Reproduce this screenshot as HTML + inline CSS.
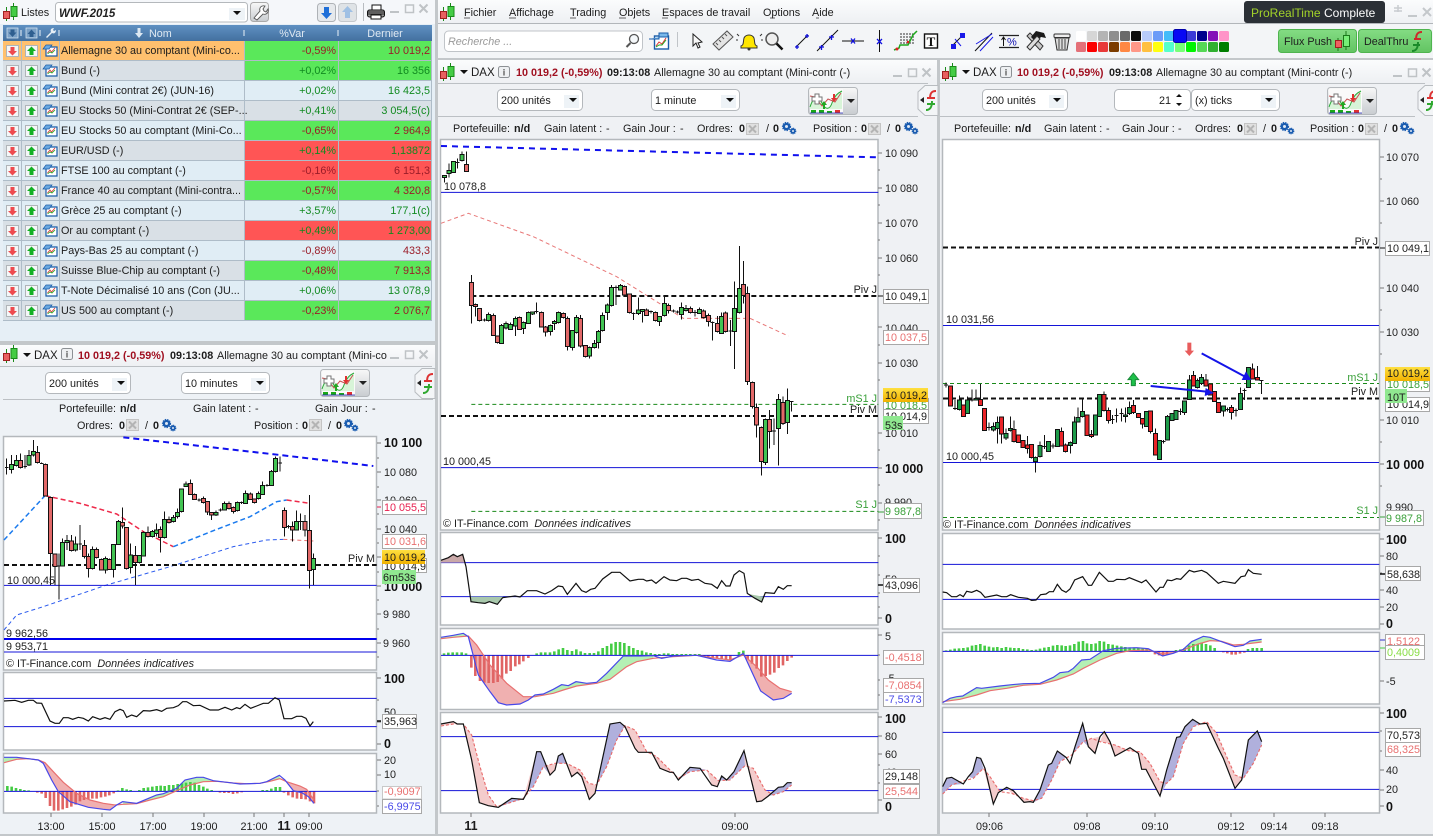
<!DOCTYPE html>
<html><head><meta charset="utf-8"><title>ProRealTime</title>
<style>
html,body{margin:0;padding:0;width:1433px;height:836px;overflow:hidden;background:#c3c7ca}
svg{display:block;position:absolute;left:0;top:0}
text{font-family:"Liberation Sans",sans-serif;font-size:10.8px;fill:#1c1c1c;white-space:pre}
.b{font-weight:bold}.e{text-anchor:end}.m{text-anchor:middle}
.bg{font-weight:bold;font-size:12.5px;fill:#111}
.ax{fill:#222;font-size:10.8px}
.p{fill:#a01020;font-weight:bold}
.neg{fill:#9a1c28}.pos{fill:#118a20}
.s{vector-effect:non-scaling-stroke;fill:none}
.w{stroke:#111;stroke-width:1;vector-effect:non-scaling-stroke;fill:none;shape-rendering:crispEdges}
.g{fill:#42c453;stroke:#111;stroke-width:1;vector-effect:non-scaling-stroke;shape-rendering:crispEdges}
.r{fill:#e26868;stroke:#111;stroke-width:1;vector-effect:non-scaling-stroke;shape-rendering:crispEdges}
.g2{fill:#1e9c4a;stroke:#111;stroke-width:1;vector-effect:non-scaling-stroke;shape-rendering:crispEdges}
.r2{fill:#ea2428;stroke:#111;stroke-width:1;vector-effect:non-scaling-stroke;shape-rendering:crispEdges}
.bl{stroke:#1414d8;stroke-width:1;vector-effect:non-scaling-stroke;fill:none}
.k{stroke:#111;stroke-width:1.2;vector-effect:non-scaling-stroke;fill:none}
.rl{stroke:#e87070;stroke-width:1.2;vector-effect:non-scaling-stroke;fill:none}
.rd{stroke:#e86a6a;stroke-width:1.1;stroke-dasharray:3 2;vector-effect:non-scaling-stroke;fill:none}
.ub{stroke:#4848e8;stroke-width:1.2;vector-effect:non-scaling-stroke;fill:none}
.bg1{stroke:#44cc44;stroke-width:2.6;vector-effect:non-scaling-stroke;fill:none}
.bg2{stroke:#e06464;stroke-width:2.6;vector-effect:non-scaling-stroke;fill:none}
.fr{fill:#f0b0b0}.fg{fill:#b4f0b4}.fp{fill:#f4cccc}.fv{fill:#b0b0dc}
.fb{fill:#fff;stroke:#b4b8bc;stroke-width:1.5}
.vb{fill:#fff;stroke:#a8a8a8;stroke-width:1}
.sel{fill:#fff;stroke:#b4b8bc;stroke-width:1}
.tk{stroke:#777;stroke-width:1;fill:none;shape-rendering:crispEdges}
.sep{stroke:#aeb6bc;stroke-width:1;shape-rendering:crispEdges}
</style></head><body>
<svg xmlns="http://www.w3.org/2000/svg" width="1433" height="836" viewBox="0 0 1433 836">
<defs>
<linearGradient id="tg" x1="0" y1="0" x2="0" y2="1"><stop offset="0" stop-color="#fbfcfd"/><stop offset="1" stop-color="#eef0f3"/></linearGradient>
<linearGradient id="hd" x1="0" y1="0" x2="0" y2="1"><stop offset="0" stop-color="#5f90c2"/><stop offset="1" stop-color="#43709f"/></linearGradient>
<linearGradient id="yl" x1="0" y1="0" x2="0" y2="1"><stop offset="0" stop-color="#ffe040"/><stop offset="1" stop-color="#f0b000"/></linearGradient>
<linearGradient id="gb" x1="0" y1="0" x2="0" y2="1"><stop offset="0" stop-color="#84dc84"/><stop offset="1" stop-color="#62c462"/></linearGradient>
<linearGradient id="btn" x1="0" y1="0" x2="0" y2="1"><stop offset="0" stop-color="#f8f8f8"/><stop offset="1" stop-color="#c8ccd0"/></linearGradient>
<g id="logo"><path d="M6.5 6v14M13.500 2v17" stroke="#1a8a1a" stroke-width="1"/><rect x="3.500" y="10.500" width="6" height="7" fill="#e86060" stroke="#a02020"/><rect x="11" y="5.500" width="6" height="10" fill="#44cc44" stroke="#1a8a1a"/></g>
<g id="rowi"><rect x="6.500" y="4.500" width="12" height="11" fill="#f4f6f7" stroke="#b0b4b8"/><path d="M10.500 6h4v4h2.500l-4.500 4.500-4.500-4.500h2.500z" fill="#ee4a4e"/><rect x="25.500" y="4.500" width="12" height="11" fill="#f4f6f7" stroke="#b0b4b8"/><path d="M29.500 14h4v-4h2.500l-4.500-4.500-4.500 4.500h2.500z" fill="#14b024"/><path d="M46 6h11v9h-11z" fill="#fff" stroke="#1a5ca8" stroke-width="1.200"/><path d="M43 8l3-4h6l-3 4z" fill="#6aa8e0" stroke="#1a5ca8" stroke-width=".7"/><path d="M47.500 12l2.500-3 1.500 2 3.500-4" fill="none" stroke="#e03030" stroke-width=".8"/><path d="M47.500 13l2.500-2 2 1 3-3" fill="none" stroke="#22aa22" stroke-width=".8"/></g>
<g id="gear"><circle cx="5.500" cy="5.500" r="3.800" fill="#1a5cb0" stroke="#1a5cb0" stroke-width="1.600" stroke-dasharray="1.300 1"/><circle cx="5.500" cy="5.500" r="1.500" fill="#dfe8f4"/><circle cx="12" cy="10" r="2.700" fill="#1a5cb0" stroke="#1a5cb0" stroke-width="1.300" stroke-dasharray="1 .8"/><circle cx="12" cy="10" r="1" fill="#dfe8f4"/></g>
<g id="xb"><rect x=".5" y=".5" width="12" height="11" fill="#e0e0e0" stroke="#c4c4c4"/><path d="M3 2.500l7 7M10 2.500l-7 7" stroke="#b4b4b4" stroke-width="2"/></g>
<g id="win"><path d="M0 8h9" stroke="#bfc3c6" stroke-width="2"/><rect x="15.500" y="1" width="8" height="7.500" fill="none" stroke="#bfc3c6" stroke-width="1.500"/><path d="M29.500 0.500l8 8M37.500 0.500l-8 8" stroke="#bfc3c6" stroke-width="2"/></g>
<g id="info"><rect x=".5" y=".5" width="11" height="11" rx="2" fill="#eef0f2" stroke="#8c9094"/><text x="6" y="9.500" class="m b" style="font-size:9px;fill:#555">i</text></g>
<g id="ind"><rect x=".5" y=".5" width="49" height="27" rx="3" fill="url(#btn)" stroke="#b4b8bc"/><rect x="2" y="2" width="33" height="24" fill="#fafafa"/><path d="M2 20c4-12 8-12 12-4 4 8 8 6 10 0 3-8 6-10 10-12v18H2z" fill="#d8f4d8"/><path d="M2 20c4-12 8-12 12-4 4 8 8 6 10 0 3-8 6-10 10-12" fill="none" stroke="#2aaa3a"/><path d="M2 9l5 1 7 9 6-7 7 3 6-9" fill="none" stroke="#c85050"/><path d="M4 10h3v-3h4v3h3v4h-3v3H7v-3H4z" fill="#fff" stroke="#777"/><path d="M15 22v-4h-2l3-4 3 4h-2v4z" fill="#22a822"/><path d="M25 7v4h-2l3 4 3-4h-2V7z" fill="#e03030"/><path d="M3 26v-3h5v3zM11 26v-3h5v3zM19 26v-2h5v2z" fill="#18a818"/><path d="M27 26v-3h5v3z" fill="#e03030"/><path d="M2 26h33" stroke="#2222bb" stroke-width=".8"/><path d="M39 12h8l-4 4z" fill="#222"/></g>
<g id="ficon"><path d="M8 .5h13v30H8L1 24V7z" fill="#f3f5f7" stroke="#b8bcc0"/><path d="M3 15l4-3v6z" fill="#222"/><path d="M13 14c0-5 1-8 6-8M10 13h8" stroke="#dd3333" stroke-width="2" fill="none"/><path d="M15 16c0 5-1 9-6 9M10 19h8" stroke="#2fa82f" stroke-width="2" fill="none"/></g>
<path id="arr" d="M0 0h8l-4 4z" fill="#111"/>
</defs>

<!-- LEFT LIST PANEL -->
<rect x="0" y="0" width="435" height="341" fill="#e6eff6"/>
<rect x="0" y="0" width="435" height="24" fill="#f5f7fa"/>
<use href="#logo" x="0" y="1"/>
<text x="21" y="16">Listes</text>
<rect x="55.500" y="2.500" width="192" height="19.500" rx="3" class="sel"/>
<text x="59" y="17" class="b" style="font-style:italic;font-size:11.500px;fill:#222">WWF.2015</text>
<rect x="229" y="8" width="16" height="12" fill="#eef3f7"/><use href="#arr" x="233" y="11"/>
<rect x="250.500" y="2.500" width="18" height="19" rx="3" fill="url(#btn)" stroke="#aaa"/>
<path d="M254 18l6-7c-1-3 1-6 5-5l-2 3 1 2 2 1 2-3c1 4-2 6-5 5l-6 6z" fill="#fff" stroke="#555" stroke-width=".9"/>
<rect x="317.500" y="3.500" width="18" height="18" rx="3" fill="#e6e9ec" stroke="#aeb2b6"/><path d="M324 7h5v6h3l-5.500 6-5.500-6h3z" fill="#1f6fd8"/>
<rect x="338.500" y="3.500" width="18" height="18" rx="3" fill="#dfe3e6" stroke="#c4c8cc"/><path d="M345 18h5v-6h3l-5.500-6-5.500 6h3z" fill="#9fc0e4"/>
<path d="M363.500 3v18" stroke="#b8bcc0"/>
<path d="M372 5h9v5h-9z" fill="#fff" stroke="#111"/><rect x="367.500" y="10" width="17" height="7" rx="2" fill="#999" stroke="#111"/><path d="M371 15h10v4h-10z" fill="#fff" stroke="#111"/><path d="M368 12h16M368 14h16" stroke="#222"/>
<use href="#win" x="390" y="4"/>

<rect x="3" y="25" width="429" height="16" fill="url(#hd)"/>
<g stroke="#eaf2f8" shape-rendering="crispEdges"><path d="M21 30v6M40 30v6M59 30v6M244 30v6M338 30v6"/></g>
<rect x="7" y="28" width="11" height="10" fill="#7aa0c6" stroke="#dce8f2" stroke-width=".7"/><path d="M10.500 29.500h4v3h2l-4 4.500-4-4.500h2z" fill="#2f5f90"/>
<rect x="26" y="28" width="11" height="10" fill="#7aa0c6" stroke="#dce8f2" stroke-width=".7"/><path d="M29.500 37h4v-3h2l-4-4.500-4 4.500h2z" fill="#2f5f90"/>
<path d="M46 37l5-5c-1-2 0-4 3-4l-1 2 1 1 2-1c0 3-2 4-4 3l-5 5z" fill="#e6eef5"/>
<path d="M137.500 28h3v5h2.500l-4 5-4-5h2.500z" fill="#dce8f2"/>
<text x="149" y="37" style="fill:#dfe9f2">Nom</text>
<text x="292" y="37" class="m" style="fill:#dfe9f2">%Var</text>
<text x="385" y="37" class="m" style="fill:#dfe9f2">Dernier</text>

<!-- rows -->
<g shape-rendering="crispEdges">
<rect x="3" y="41" width="241" height="20" fill="#ffc06e"/><rect x="244" y="41" width="188" height="20" fill="#5ae85a"/>
<rect x="3" y="61" width="241" height="20" fill="#d9e0e6"/><rect x="244" y="61" width="188" height="20" fill="#5ae85a"/>
<rect x="3" y="81" width="429" height="20" fill="#e0edf5"/>
<rect x="3" y="101" width="429" height="20" fill="#d9e0e6"/>
<rect x="3" y="121" width="241" height="20" fill="#e0edf5"/><rect x="244" y="121" width="188" height="20" fill="#5ae85a"/>
<rect x="3" y="141" width="241" height="20" fill="#d9e0e6"/><rect x="244" y="141" width="188" height="20" fill="#ff5555"/>
<rect x="3" y="161" width="241" height="20" fill="#e0edf5"/><rect x="244" y="161" width="188" height="20" fill="#ff5555"/>
<rect x="3" y="181" width="241" height="20" fill="#d9e0e6"/><rect x="244" y="181" width="188" height="20" fill="#5ae85a"/>
<rect x="3" y="201" width="429" height="20" fill="#e0edf5"/>
<rect x="3" y="221" width="241" height="20" fill="#d9e0e6"/><rect x="244" y="221" width="188" height="20" fill="#ff5555"/>
<rect x="3" y="241" width="429" height="20" fill="#e0edf5"/>
<rect x="3" y="261" width="241" height="20" fill="#d9e0e6"/><rect x="244" y="261" width="188" height="20" fill="#5ae85a"/>
<rect x="3" y="281" width="429" height="20" fill="#e0edf5"/>
<rect x="3" y="301" width="241" height="20" fill="#d9e0e6"/><rect x="244" y="301" width="188" height="20" fill="#5ae85a"/>
<path d="M3 60.500h429M3 80.500h429M3 100.500h429M3 120.500h429M3 140.500h429M3 160.500h429M3 180.500h429M3 200.500h429M3 220.500h429M3 240.500h429M3 260.500h429M3 280.500h429M3 300.500h429M3 320.500h429M21.500 41v280M40.500 41v280M59.500 41v280M244.500 41v280M338.500 41v280M431.500 41v280" stroke="#aebcc8"/>
</g>
<use href="#rowi" y="41"/><use href="#rowi" y="61"/><use href="#rowi" y="81"/><use href="#rowi" y="101"/><use href="#rowi" y="121"/><use href="#rowi" y="141"/><use href="#rowi" y="161"/><use href="#rowi" y="181"/><use href="#rowi" y="201"/><use href="#rowi" y="221"/><use href="#rowi" y="241"/><use href="#rowi" y="261"/><use href="#rowi" y="281"/><use href="#rowi" y="301"/>
<g>
<text x="61" y="54">Allemagne 30 au comptant (Mini-co...</text><text x="336" y="54" class="e neg">-0,59%</text><text x="430" y="54" class="e neg">10 019,2</text>
<text x="61" y="74">Bund (-)</text><text x="336" y="74" class="e pos">+0,02%</text><text x="430" y="74" class="e pos">16 356</text>
<text x="61" y="94">Bund (Mini contrat 2€) (JUN-16)</text><text x="336" y="94" class="e pos">+0,02%</text><text x="430" y="94" class="e pos">16 423,5</text>
<text x="61" y="114">EU Stocks 50 (Mini-Contrat 2€ (SEP-...</text><text x="336" y="114" class="e pos">+0,41%</text><text x="430" y="114" class="e pos">3 054,5(c)</text>
<text x="61" y="134">EU Stocks 50 au comptant (Mini-Co...</text><text x="336" y="134" class="e neg">-0,65%</text><text x="430" y="134" class="e neg">2 964,9</text>
<text x="61" y="154">EUR/USD (-)</text><text x="336" y="154" class="e pos">+0,14%</text><text x="430" y="154" class="e pos">1,13872</text>
<text x="61" y="174">FTSE 100 au comptant (-)</text><text x="336" y="174" class="e neg">-0,16%</text><text x="430" y="174" class="e neg">6 151,3</text>
<text x="61" y="194">France 40 au comptant (Mini-contra...</text><text x="336" y="194" class="e neg">-0,57%</text><text x="430" y="194" class="e neg">4 320,8</text>
<text x="61" y="214">Grèce 25 au comptant (-)</text><text x="336" y="214" class="e pos">+3,57%</text><text x="430" y="214" class="e pos">177,1(c)</text>
<text x="61" y="234">Or au comptant (-)</text><text x="336" y="234" class="e pos">+0,49%</text><text x="430" y="234" class="e pos">1 273,00</text>
<text x="61" y="254">Pays-Bas 25 au comptant (-)</text><text x="336" y="254" class="e neg">-0,89%</text><text x="430" y="254" class="e neg">433,3</text>
<text x="61" y="274">Suisse Blue-Chip au comptant (-)</text><text x="336" y="274" class="e neg">-0,48%</text><text x="430" y="274" class="e neg">7 913,3</text>
<text x="61" y="294">T-Note Décimalisé 10 ans (Con (JU...</text><text x="336" y="294" class="e pos">+0,06%</text><text x="430" y="294" class="e pos">13 078,9</text>
<text x="61" y="314">US 500 au comptant (-)</text><text x="336" y="314" class="e neg">-0,23%</text><text x="430" y="314" class="e neg">2 076,7</text>
</g>

<!-- TOP BAR -->
<rect x="438" y="0" width="995" height="23" fill="url(#tg)"/>
<rect x="438" y="24" width="995" height="34" fill="#f3f5f7"/>
<path d="M438 23.500h995" stroke="#b2b6ba"/>
<use href="#logo" x="437" y="1"/>
<text x="464" y="16">Fichier</text>
<text x="509" y="16">Affichage</text><text x="570" y="16">Trading</text><text x="619" y="16">Objets</text><text x="662" y="16">Espaces de travail</text><text x="763" y="16">Options</text><text x="812" y="16">Aide</text>
<path d="M464 18h6M509 18h7M570 18h6M619 18h7M662 18h6M770 18h5M816 18h3" stroke="#333" stroke-width=".8"/>
<rect x="1244" y="1" width="141" height="22" rx="3" fill="#2b3036"/>
<text x="1251" y="17" style="font-size:12px;fill:#a2d22a">ProRealTime</text><text x="1324" y="17" style="font-size:12px;fill:#fff">Complete</text>
<path d="M1394 8h8M1398 5v7M1402 11h-8" stroke="#c8cccf" stroke-width="1.500"/><path d="M1408 16h9" stroke="#c4c8cb" stroke-width="2"/><path d="M1423 8l8 8M1431 8l-8 8" stroke="#c4c8cb" stroke-width="2"/>

<rect x="444.500" y="31" width="198" height="20.500" rx="4" fill="#fff" stroke="#c0c4c8"/>
<text x="448" y="45" style="font-style:italic;fill:#999">Recherche ...</text>
<circle cx="634" cy="39" r="4.500" fill="#f5f8fa" stroke="#555" stroke-width="1.300"/><path d="M630.500 43l-4 4" stroke="#555" stroke-width="2"/>
<rect x="654.500" y="36" width="14" height="13" fill="#fff" stroke="#1a5ca8" stroke-width="1.400"/><path d="M649 39h10v-6h9v4h-9" fill="#7ab8ea" stroke="#1a5ca8"/><path d="M656 46l3-4 3 2 4-6" stroke="#d33" fill="none"/><path d="M656 47l3-2 3 0 4-5" stroke="#2a2" fill="none"/>
<path d="M677.500 32v15" stroke="#c0c4c8"/>
<!-- tool icons -->
<path d="M693 34l0 12 3-3 2 5 2-1-2-4 4-1z" fill="#f8f8f8" stroke="#222"/>
<path d="M713 44l14-13 6 6-14 13z" fill="#e4e4e4" stroke="#555"/><path d="M716 43l2 2M719 40l2 2M722 37l2 2M725 34l2 2" stroke="#555"/>
<path d="M741 46c3-1 2-4 3-8 1-2 3-3 5-3s4 1 5 3c1 4 0 7 3 8v2h-16z" fill="#ffe600" stroke="#333"/><circle cx="749" cy="49" r="1.500" fill="#333"/><path d="M739 36l-2-2M760 36l2-2M738 40h-2M761 40h2" stroke="#333"/>
<circle cx="772" cy="39" r="6" fill="#eee" stroke="#555" stroke-width="1.500"/><path d="M776.500 43.500l6 6" stroke="#111" stroke-width="2.500"/>
<path d="M796 47l12-12" stroke="#111"/><path d="M795 47h4M797 45v4M805 36h4M807 34v4" stroke="#1010e0" stroke-width="1.300"/>
<path d="M817 51l21-21" stroke="#111"/><path d="M819 47h5M821.500 45v5M829 37h5M831.500 35v5" stroke="#1010e0" stroke-width="1.300"/>
<path d="M842 41h22" stroke="#111"/><path d="M851 38.500l4 5M855 38.500l-4 5" stroke="#1010e0" stroke-width="1.300"/>
<path d="M879.500 30v22" stroke="#111"/><path d="M877 39l5 5M882 39l-5 5" stroke="#1010e0" stroke-width="1.300"/>
<path d="M900 34h14M900 37h14M900 40h14M900 43h14" stroke="#333" stroke-dasharray="2 1"/><path d="M894 50l5-2 1-3h8l5-10 4-4" fill="none" stroke="#1ea81e" stroke-width="1.500"/><circle cx="897" cy="49" r="1.500" fill="#d22"/><circle cx="908" cy="42" r="1.300" fill="#d22"/>
<rect x="924.500" y="34" width="13" height="14" fill="#fff" stroke="#111" stroke-width="1.400"/><text x="931" y="46" class="m b" style="font-family:'Liberation Serif',serif;font-size:13px;fill:#111">T</text>
<path d="M952 46l10-10" stroke="#111"/><path d="M951 44h5v5h-5zM960 33h5v5h-5z" fill="#1a1ae8"/><path d="M955 39l6 7" stroke="#1a1ae8"/>
<path d="M975 51l17-18" stroke="#111"/><path d="M976 44l16-10M980 51l13-14" stroke="#1a1ae8"/>
<path d="M999 35.500h20M999 47.500h20" stroke="#222" stroke-width="1.200"/><path d="M1003.500 46v-8M1001.500 40l2-3 2 3" stroke="#111" fill="none"/><text x="1007" y="45.500" style="font-size:11px;fill:#1010b0">%</text>
<path d="M1027 36l3-3 13 13-3 4z" fill="#c8c8c8" stroke="#333"/><path d="M1031 37l5-6 8 2 2 5-5-1-5 5z" fill="#1a1a1a"/><path d="M1027 47l10-11 3 3-10 11z" fill="#ddd" stroke="#333"/>
<path d="M1055 38h14l-2 12h-10z" fill="#ddd" stroke="#333"/><rect x="1054" y="34" width="16" height="3.500" rx="1" fill="#eee" stroke="#333"/><path d="M1059 39v10M1062 39v10M1065 39v10" stroke="#444"/>
<g>
<rect x="1076" y="31" width="10" height="10" rx="1.500" fill="#fff"/><rect x="1087" y="31" width="10" height="10" rx="1.500" fill="#d6d6d6"/><rect x="1098" y="31" width="10" height="10" rx="1.500" fill="#b4b4b4"/><rect x="1109" y="31" width="10" height="10" rx="1.500" fill="#8e8e8e"/><rect x="1120" y="31" width="10" height="10" rx="1.500" fill="#6a6a6a"/><rect x="1131" y="31" width="10" height="10" rx="1.500" fill="#0c0c0c"/><rect x="1142" y="31" width="10" height="10" rx="1.500" fill="#b8ccfa"/><rect x="1153" y="31" width="10" height="10" rx="1.500" fill="#6c9cf8"/><rect x="1164" y="31" width="10" height="10" rx="1.500" fill="#44bcfa"/><rect x="1186" y="31" width="10" height="10" rx="1.500" fill="#3a3ad8"/><rect x="1197" y="31" width="10" height="10" rx="1.500" fill="#00008c"/><rect x="1208" y="31" width="10" height="10" rx="1.500" fill="#8410b8"/><rect x="1219" y="31" width="10" height="10" rx="1.500" fill="#ff94c8"/>
<rect x="1076" y="42" width="10" height="10" rx="1.500" fill="#e47078"/><rect x="1087" y="42" width="10" height="10" rx="1.500" fill="#fb0000"/><rect x="1098" y="42" width="10" height="10" rx="1.500" fill="#e83a3a"/><rect x="1109" y="42" width="10" height="10" rx="1.500" fill="#7c3c00"/><rect x="1120" y="42" width="10" height="10" rx="1.500" fill="#ff8844"/><rect x="1131" y="42" width="10" height="10" rx="1.500" fill="#ff9888"/><rect x="1142" y="42" width="10" height="10" rx="1.500" fill="#ffc040"/><rect x="1153" y="42" width="10" height="10" rx="1.500" fill="#ffff10"/><rect x="1164" y="42" width="10" height="10" rx="1.500" fill="#55ffcc"/><rect x="1175" y="42" width="10" height="10" rx="1.500" fill="#77ff77"/><rect x="1186" y="42" width="10" height="10" rx="1.500" fill="#00f400"/><rect x="1197" y="42" width="10" height="10" rx="1.500" fill="#55d855"/><rect x="1208" y="42" width="10" height="10" rx="1.500" fill="#30b030"/><rect x="1219" y="42" width="10" height="10" rx="1.500" fill="#007e00"/>
</g>
<rect x="1173.500" y="29.500" width="13" height="13" rx="2" fill="#0808f4" stroke="#0000aa"/>
<rect x="1278.500" y="29.500" width="78" height="23" rx="3" fill="url(#gb)" stroke="#4fb44f"/>
<text x="1284" y="45">Flux Push</text>
<path d="M1338 38v13M1346 31v19" stroke="#1a7a1a"/><rect x="1335.500" y="40.500" width="6" height="7" fill="#ee6060" stroke="#a02020"/><rect x="1343.500" y="35.500" width="6" height="11" fill="#77ee77" stroke="#1a7a1a"/>
<rect x="1358.500" y="29.500" width="73" height="23" rx="3" fill="url(#gb)" stroke="#4fb44f"/>
<text x="1364" y="45">DealThru</text>
<path d="M1416 40c0-5 1-8 6-8M1414 39h7" stroke="#cc2a2a" stroke-width="2" fill="none"/><path d="M1418 42c0 5-1 9-6 9M1413 45h7" stroke="#1b8a2a" stroke-width="2" fill="none"/>

<!-- LEFT CHART PANEL -->
<rect x="0" y="345" width="435" height="489" fill="#eef2f6"/>
<rect x="0" y="345" width="435" height="21" fill="url(#tg)"/>
<path d="M0 366.500h432M3 399.500h430" stroke="#bcc0c4" shape-rendering="crispEdges"/>
<use href="#logo" x="0" y="343"/><use href="#arr" x="23" y="353"/>
<text x="34" y="359" style="font-size:11.500px">DAX</text><use href="#info" x="61" y="348"/>
<text x="78" y="359" class="p">10 019,2 (-0,59%)</text><text x="170" y="359" class="b">09:13:08</text><text x="217" y="359">Allemagne 30 au comptant (Mini-co</text>
<use href="#win" x="390" y="350"/>
<rect x="45.500" y="372.500" width="85" height="21" rx="4" class="sel"/><text x="49" y="387">200 unités</text><rect x="112" y="378" width="15" height="13" fill="#eef3f7"/><use href="#arr" x="117" y="381"/>
<rect x="181.500" y="372.500" width="88" height="21" rx="4" class="sel"/><text x="185" y="387">10 minutes</text><rect x="251" y="378" width="15" height="13" fill="#eef3f7"/><use href="#arr" x="256" y="381"/>
<use href="#ind" x="320" y="369"/><use href="#ficon" x="414" y="368"/>
<text x="59" y="412">Portefeuille:</text><text x="120" y="412" class="b">n/d</text><text x="193" y="412">Gain latent :</text><text x="255" y="412">-</text><text x="315" y="412">Gain Jour :</text><text x="372" y="412">-</text>
<text x="77" y="429">Ordres:</text><text x="119" y="429" class="b">0</text><use href="#xb" x="126" y="419"/><text x="145" y="429">/</text><text x="153" y="429" class="b">0</text><use href="#gear" x="161" y="418"/>
<text x="254" y="429">Position :</text><text x="302" y="429" class="b">0</text><use href="#xb" x="309" y="419"/><text x="328" y="429">/</text><text x="336" y="429" class="b">0</text><use href="#gear" x="343" y="418"/>
<rect x="3.500" y="436.500" width="373" height="233.500" class="fb"/>
<rect x="3.500" y="672.500" width="373" height="77.500" class="fb"/>
<rect x="3.500" y="753.500" width="373" height="59.500" class="fb"/>

<!-- left chart content -->
<g transform="translate(0 340) scale(.33333)">
<path class="s" stroke="#1010ee" style="stroke-width:2;stroke-dasharray:6 4" d="M370 292L840 345L1120 378"/>
<path class="s" stroke="#1a7aee" style="stroke-width:1.500;stroke-dasharray:5 3" d="M12 600L135 467"/>
<path class="s" stroke="#ee2a4a" style="stroke-width:1.500;stroke-dasharray:5 3" d="M135 467L240 490L350 522L430 575L520 620"/>
<path class="s" stroke="#1a7aee" style="stroke-width:1.500;stroke-dasharray:5 3" d="M520 620L640 572L750 530L830 485L860 480"/>
<path class="s" stroke="#ee2a4a" style="stroke-width:1.500;stroke-dasharray:5 3" d="M860 480L930 490"/>
<path class="s" stroke="#2a5aee" style="stroke-width:1;stroke-dasharray:4 3" d="M12 870L50 825L130 800L320 735L510 680L700 620L800 600L850 598"/>
<path class="s" stroke="#e87070" style="stroke-width:1;stroke-dasharray:4 3" d="M850 598L940 603"/>
<path class="s" stroke="#111" style="stroke-width:2;stroke-dasharray:5 3" d="M12 675H1130"/>
<path class="bl" d="M12 736H1130M12 936H1130"/><path class="s" stroke="#0000ee" style="stroke-width:2" d="M12 897H1130"/>
<path class="w" d="M20 355V403M15 382H26M35 345V400M49 345V380M62 340V385M75 345V385M70 380H81M87 330V378M100 300V350M113 318V370M125 368V372M120 370H131M137 370V470M152 470V735M165 642V735M177 640V778M172 678H183M188 595V680M201 585V630M214 585V635M227 590V635M240 555V630M235 612H246M253 600V655M265 640V712M278 620V688M290 622V655M304 655V692M316 650V700M328 655V690M341 613V712M355 540V615M367 502V565M380 562V688M392 610V700M406 618V735M418 645V670M431 575V650M444 560V592M457 570V592M470 550V590M482 560V638M494 515V595M507 530V550M520 525V548M533 505V535M545 445V518M558 425V440M571 418V465M584 460V480M597 476V484M592 480H603M610 470V490M622 484V525M635 517V540M648 512V528M661 506V514M656 510H667M674 485V512M687 485V508M700 500V520M713 485V515M725 484V492M720 488H731M737 452V492M751 458V480M763 475V490M775 455V478M788 425V465M801 432V440M796 436H807M814 390V438M826 350V398M840 350V395M835 369H846M853 502V590M865 555V565M860 560H871M877 545V605M889 512V572M902 520V570M897 545H908M915 525V590M928 465V745M941 640V735"/>
<path class="g" d="M29 373h12v15h-12zM43 362h12v14h-12zM81 346h12v29h-12zM94 335h12v10h-12zM182 607h12v71h-12zM195 602h12v5h-12zM221 612h12v18h-12zM272 628h12v57h-12zM310 655h12v35h-12zM335 613h12v75h-12zM349 545h12v68h-12zM386 645h12v37h-12zM412 646h12v21h-12zM425 578h12v70h-12zM451 575h12v15h-12zM464 570h12v10h-12zM488 538h12v54h-12zM514 532h12v13h-12zM527 517h12v13h-12zM539 447h12v68h-12zM552 432h12v8h-12zM642 517h12v8h-12zM668 490h12v20h-12zM707 488h12v24h-12zM731 460h12v30h-12zM769 460h12v16h-12zM782 437h12v26h-12zM808 395h12v41h-12zM820 355h12v40h-12zM883 545h12v25h-12zM935 656h12v32h-12z"/>
<path class="r" d="M56 362h12v20h-12zM107 338h12v30h-12zM131 373h12v95h-12zM146 472h12v168h-12zM159 642h12v38h-12zM208 603h12v28h-12zM247 617h12v33h-12zM259 650h12v35h-12zM284 628h12v24h-12zM298 658h12v32h-12zM322 658h12v30h-12zM361 547h12v11h-12zM374 562h12v123h-12zM400 647h12v20h-12zM438 578h12v12h-12zM476 568h12v25h-12zM501 538h12v9h-12zM565 430h12v33h-12zM578 463h12v15h-12zM604 475h12v13h-12zM616 484h12v32h-12zM629 517h12v8h-12zM681 490h12v15h-12zM694 502h12v12h-12zM745 462h12v16h-12zM757 477h12v11h-12zM847 512h12v51h-12zM871 560h12v10h-12zM909 545h12v25h-12zM922 572h12v120h-12z"/>
</g>
<text x="7" y="584" class="ax">10 000,45</text>
<text x="6" y="637" class="ax">9 962,56</text><text x="6" y="650" class="ax">9 953,71</text>
<text x="6" y="667" class="ax">© IT-Finance.com  <tspan style="font-style:italic">Données indicatives</tspan></text>
<text x="375" y="562" class="ax e" style="fill:#222">Piv M</text>
<!-- left axis -->
<path class="tk" d="M377 443h4M377 458h2M377 472h4M377 487h2M377 500h4M377 514h2M377 529h4M377 543h2M377 557h4M377 572h2M377 586h4M377 600h2M377 614h4M377 629h2M377 643h4M377 657h2"/>
<text x="384" y="447" class="bg">10 100</text><text x="384" y="476" class="ax">10 080</text><text x="384" y="504" class="ax">10 060</text><text x="384" y="533" class="ax">10 040</text><text x="384" y="591" class="bg">10 000</text><text x="383" y="618" class="ax">9 980</text><text x="383" y="647" class="ax">9 960</text>
<rect x="382.500" y="500.500" width="44" height="14" class="vb"/><text x="384" y="511" style="fill:#e82050">10 055,5</text><path d="M377 507h4" stroke="#e82050"/>
<rect x="382.500" y="534.500" width="44" height="14" class="vb"/><text x="384" y="545" style="fill:#e87070">10 031,6</text>
<rect x="382.500" y="558.500" width="44" height="14" class="vb"/><text x="384" y="570">10 014,9</text>
<rect x="382" y="550" width="43" height="14" fill="url(#yl)"/><text x="384" y="561">10 019,2</text>
<rect x="382" y="570" width="34" height="14" fill="#90e890"/><text x="383" y="581">6m53s</text>
<!-- left indicators -->
<g transform="translate(0 620) scale(.33333)">
<path class="bl" d="M12 235H1130M12 320H1130"/>
<path class="k" d="M12 243L45 241L65 247L85 241L100 241L110 249L125 250L150 303L165 310L178 310L190 293L205 293L218 298L235 292L250 295L265 303L278 290L300 298L315 293L330 298L345 275L360 268L370 272L380 292L395 285L410 290L430 272L450 273L470 269L485 274L500 265L520 263L535 257L548 245L560 245L580 257L600 256L630 270L655 270L675 262L695 270L710 263L720 266L735 253L752 265L770 258L790 250L805 250L825 233L838 240L852 296L875 296L890 289L905 289L918 295L930 318L940 305"/>
<path class="fg" d="M12 412L50 412L85 416L50 418L12 428z"/>
<path class="fr" d="M115 420L135 428L160 455L190 487L230 520L270 540L310 550L345 555L330 570L310 568L265 562L210 545L175 515L155 480L130 430z"/>
<path class="fg" d="M368 545L410 550L470 525L490 521L530 505L555 480L590 472L610 472L640 482L610 485L570 495L530 512L490 530L450 540L410 551L370 553z"/>
<path class="fg" d="M800 485L838 466L840 476L810 484z"/>
<path class="fr" d="M840 476L860 485L900 498L920 508L942 540L942 550L925 530L905 518L880 512L855 480z"/>
<path class="bg1" d="M22 514V498M35 514V500M48 514V504M61 514V507M73 514V510M86 514V511M354 514V511M367 514V504M380 514V508M392 514V510M418 514V510M431 514V504M444 514V502M457 514V500M470 514V498M482 514V497M494 514V498M507 514V495M520 514V495M533 514V492M546 514V490M558 514V488M571 514V486M584 514V488M597 514V495M610 514V500M622 514V506M635 514V510M788 514V510M801 514V510M814 514V506M827 514V501M840 514V501"/>
<path class="bg2" d="M112 514V518M125 514V521M137 514V534M150 514V558M162 514V572M175 514V572M188 514V568M201 514V564M214 514V560M227 514V554M240 514V544M252 514V540M265 514V538M277 514V536M290 514V536M303 514V532M316 514V530M328 514V526M341 514V520M660 514V518M673 514V519M686 514V519M699 514V522M712 514V520M725 514V517M852 514V518M865 514V526M878 514V532M891 514V536M904 514V537M917 514V538M930 514V544M942 514V550"/>
<path class="bl" d="M12 514H1130"/>
<path class="rl" d="M12 428L50 418L85 416L115 420L135 428L160 455L190 487L230 520L270 540L310 550L345 555L370 553L410 551L450 540L490 530L530 512L570 495L610 485L650 484L700 489L740 491L780 490L810 484L840 476L860 485L900 498L920 508L942 540"/>
<path class="ub" d="M12 412L50 412L85 416L115 420L130 430L155 480L175 515L210 545L265 562L310 568L330 570L350 555L368 545L410 550L470 525L490 521L530 505L555 480L590 472L610 472L640 482L690 488L720 492L780 490L800 485L838 466L855 480L880 512L905 518L925 530L942 550"/>
</g>
<path class="tk" d="M377 678h4M377 700h2M377 722h4M377 744h4M377 760h4M377 775h4M377 791h2M377 806h2M51 813v4M102 813v4M153 813v4M204 813v4M254 813v4M284 813v4M309 813v4"/>
<text x="384" y="683" class="bg">100</text><text x="384" y="716" class="ax">50</text>
<text x="384" y="748" class="bg">0</text>
<rect x="382.500" y="714.500" width="34" height="14" class="vb"/><text x="384" y="725">35,963</text><path d="M377 721h4" stroke="#111" stroke-width="1.500"/>
<text x="384" y="764" class="ax">20</text><text x="384" y="778" class="ax">10</text>
<rect x="382.500" y="786.500" width="39" height="12.500" class="vb" style="stroke:#c8c8c8"/><text x="384" y="795" style="fill:#e87070">-0,9097</text>
<rect x="382.500" y="799.500" width="39" height="14" class="vb"/><text x="384" y="810" style="fill:#4a4ae8">-6,9975</text>
<g class="ax"><text x="51" y="830" class="m">13:00</text><text x="102" y="830" class="m">15:00</text><text x="153" y="830" class="m">17:00</text><text x="204" y="830" class="m">19:00</text><text x="254" y="830" class="m">21:00</text><text x="284" y="830" class="m b" style="font-size:12.500px">11</text><text x="309" y="830" class="m">09:00</text></g>

<!-- CENTER CHART PANEL -->
<rect x="438" y="60" width="499" height="774" fill="#eff1f4"/>
<rect x="438" y="60" width="499" height="23" fill="url(#tg)"/>
<path d="M438 83.500h490M438 116.500h480" stroke="#bcc0c4" shape-rendering="crispEdges"/>
<use href="#logo" x="437" y="61"/><use href="#arr" x="460" y="70"/>
<text x="471" y="76" style="font-size:11.500px">DAX</text><use href="#info" x="498" y="66"/>
<text x="516" y="76" class="p">10 019,2 (-0,59%)</text><text x="607" y="76" class="b">09:13:08</text><text x="654" y="76">Allemagne 30 au comptant (Mini-contr (-)</text>
<use href="#win" x="893" y="68"/>
<rect x="497.500" y="89.500" width="85" height="21" rx="4" class="sel"/><text x="501" y="104">200 unités</text><rect x="564" y="95" width="15" height="13" fill="#eef3f7"/><use href="#arr" x="569" y="98"/>
<rect x="651.500" y="89.500" width="88" height="21" rx="4" class="sel"/><text x="655" y="104">1 minute</text><rect x="721" y="95" width="15" height="13" fill="#eef3f7"/><use href="#arr" x="726" y="98"/>
<use href="#ind" x="808" y="87"/><use href="#ficon" x="917" y="85"/>
<text x="453" y="132">Portefeuille:</text><text x="514" y="132" class="b">n/d</text><text x="544" y="132">Gain latent :</text><text x="606" y="132">-</text><text x="623" y="132">Gain Jour :</text><text x="680" y="132">-</text>
<text x="697" y="132">Ordres:</text><text x="739" y="132" class="b">0</text><use href="#xb" x="746" y="123"/><text x="766" y="132">/</text><text x="773" y="132" class="b">0</text><use href="#gear" x="781" y="121"/>
<text x="813" y="132">Position :</text><text x="861" y="132" class="b">0</text><use href="#xb" x="868" y="123"/><text x="887" y="132">/</text><text x="895" y="132" class="b">0</text><use href="#gear" x="903" y="121"/>
<rect x="440.500" y="139.500" width="437.500" height="390.500" class="fb"/>
<rect x="440.500" y="532.500" width="437.500" height="92.500" class="fb"/>
<rect x="440.500" y="628.500" width="437.500" height="81" class="fb"/>
<rect x="440.500" y="712.500" width="437.500" height="100.500" class="fb"/>
<g transform="translate(440 140) scale(.33333)">
<path class="s" stroke="#1010ee" style="stroke-width:2;stroke-dasharray:6 5" d="M3 18L1310 52"/>
<path class="s" stroke="#e87878" style="stroke-width:1;stroke-dasharray:4 3" d="M3 250L85 220L280 290L530 410L730 535L830 535L930 535L1045 588"/>
<path class="s" stroke="#111" style="stroke-width:2;stroke-dasharray:5 3" d="M94 468H1315M3 828H1315"/>
<path class="s" stroke="#1a8a1a" style="stroke-width:1;stroke-dasharray:4 3" d="M94 793H1315M94 1114H1315"/>
<path class="bl" d="M3 157H1315M3 983H1315"/>
<path class="w" d="M13 106V128M7 108H19M27 70V112M40 65V97M53 55V85M47 68H59M66 35V65M79 35V95M94 405V550M107 490V530M119 505V545M133 535V545M127 540H139M146 518V545M160 520V588M172 588V610M185 552V612M198 545V568M212 548V570M226 530V588M239 530V570M251 544V582M265 515V552M278 515V525M290 487V520M284 515H296M304 515V563M317 558V590M331 553V587M344 540V570M356 515V550M370 517V535M383 530V632M397 570V632M409 525V580M422 525V622M436 615V652M449 620V655M463 600V626M476 570V625M488 518V575M502 490V540M514 435V500M528 436V495M522 442H534M541 432V452M553 437V470M568 460V520M581 518V540M575 520H587M595 472V525M607 508V548M620 505V528M633 512V520M627 515H639M646 514V545M659 528V558M673 465V530M686 490V520M700 508V518M694 513H706M712 512V520M706 516H718M725 488V538M738 495V515M751 500V520M765 510V530M759 518H771M778 502V522M791 508V535M805 520V560M817 545V602M811 548H823M832 528V577M845 518V582M857 515V578M871 540V618M865 573H877M884 425V687M898 318V520M911 363V490M923 440V735M937 725V805M950 790V893M964 860V1007M976 835V975M989 810V925M1002 835V915M996 873H1008M1015 762V977M1029 770V855M1042 745V882M1055 783V815M1049 785H1061"/>
<path class="g" d="M7 106h12v6h-12zM21 92h12v8h-12zM34 65h12v32h-12zM60 43h12v19h-12zM140 523h12v18h-12zM179 556h12v54h-12zM192 550h12v14h-12zM206 553h12v15h-12zM220 535h12v23h-12zM245 548h12v18h-12zM259 517h12v33h-12zM272 516h12v6h-12zM325 556h12v19h-12zM338 544h12v6h-12zM350 517h12v30h-12zM391 572h12v50h-12zM403 532h12v46h-12zM443 622h12v26h-12zM457 610h12v12h-12zM470 574h12v33h-12zM482 526h12v46h-12zM496 495h12v22h-12zM508 442h12v55h-12zM535 436h12v14h-12zM589 510h12v10h-12zM601 508h12v7h-12zM653 530h12v15h-12zM667 490h12v37h-12zM719 502h12v22h-12zM732 505h12v7h-12zM772 508h12v12h-12zM839 530h12v50h-12zM878 505h12v70h-12zM892 445h12v73h-12zM970 838h12v130h-12zM1009 778h12v88h-12zM1036 782h12v66h-12z"/>
<path class="r" d="M73 73h12v22h-12zM88 427h12v70h-12zM101 493h12v7h-12zM113 505h12v36h-12zM154 526h12v60h-12zM166 588h12v20h-12zM233 532h12v36h-12zM298 517h12v44h-12zM311 561h12v15h-12zM364 520h12v13h-12zM377 535h12v85h-12zM416 535h12v83h-12zM430 617h12v33h-12zM547 440h12v25h-12zM562 462h12v56h-12zM614 510h12v16h-12zM640 517h12v25h-12zM680 496h12v16h-12zM745 505h12v12h-12zM785 513h12v20h-12zM799 527h12v18h-12zM826 550h12v25h-12zM851 519h12v56h-12zM905 433h12v34h-12zM917 460h12v264h-12zM931 727h12v73h-12zM944 802h12v53h-12zM958 862h12v103h-12zM983 838h12v37h-12zM1023 787h12v63h-12z"/>
</g>
<text x="444" y="190" class="ax">10 078,8</text><text x="443" y="465" class="ax">10 000,45</text>
<text x="443" y="527" class="ax">© IT-Finance.com  <tspan style="font-style:italic">Données indicatives</tspan></text>
<text x="877" y="293" class="e ax">Piv J</text><text x="877" y="402" class="e" style="fill:#3aa03a">mS1 J</text><text x="877" y="413" class="e ax">Piv M</text><text x="877" y="508" class="e" style="fill:#3aa03a">S1 J</text>
<path class="tk" d="M878 153h4M878 170h2M878 188h4M878 205h2M878 223h4M878 240h2M878 258h4M878 275h2M878 327h4M878 345h2M878 363h4M878 380h2M878 433h4M878 450h2M878 468h4M878 485h2M878 503h4M878 520h2"/>
<g class="ax"><text x="885" y="157" class="ax">10 090</text><text x="885" y="192" class="ax">10 080</text><text x="885" y="227" class="ax">10 070</text><text x="885" y="262" class="ax">10 060</text><text x="885" y="332" class="ax">10 040</text><text x="885" y="367" class="ax">10 030</text><text x="885" y="437" class="ax">10 010</text><text x="885" y="473" class="bg">10 000</text><text x="885" y="506" class="ax">9 990</text></g>
<rect x="883.500" y="289.500" width="45" height="14" class="vb"/><text x="885" y="300">10 049,1</text><path d="M878 296h5" stroke="#111"/>
<rect x="883.500" y="330.500" width="45" height="14" class="vb"/><text x="885" y="341" style="fill:#e87070">10 037,5</text>
<rect x="883.500" y="398.500" width="45" height="14" class="vb"/><text x="885" y="409" style="fill:#3aa03a">10 018,5</text>
<rect x="883.500" y="409.500" width="45" height="14" class="vb"/><text x="885" y="420">10 014,9</text>
<rect x="883" y="388" width="45" height="14" fill="url(#yl)"/><text x="885" y="399">10 019,2</text>
<rect x="883" y="416" width="20" height="14" fill="#90e890"/><text x="885" y="429">53s</text>
<rect x="884.500" y="503.500" width="37" height="15" class="vb"/><text x="885" y="515" style="fill:#3aa03a">9 987,8</text><path d="M878 512h6" stroke="#3aa03a"/>
<g transform="translate(440 520) scale(.33333)">
<path class="bl" d="M3 128H1315M3 230H1315"/>
<path fill="#c9a8a8" d="M3 121L25 113L40 103L52 110L68 103L76 128L3 128z"/>
<path fill="#a8c8ac" d="M90 230L93 245L115 248L135 250L148 245L172 253L188 233L190 230zM925 222L945 235L965 246L970 230z"/>
<path class="k" d="M3 121L25 113L40 103L52 110L68 103L78 140L93 245L115 248L135 250L148 245L172 253L188 233L225 228L240 231L262 212L290 212L315 222L335 212L355 198L368 200L382 223L408 190L425 212L438 217L452 208L465 205L488 177L515 157L540 157L570 183L595 178L610 178L620 183L635 180L648 190L672 170L690 180L710 182L725 175L740 175L755 181L775 178L795 190L815 193L832 205L845 182L858 198L870 198L882 165L898 152L912 160L922 220L945 235L965 246L976 218L1003 220L1015 200L1030 208L1042 197L1055 197"/>
<path class="fg" d="M3 352L40 346L70 340L85 348L40 352L3 356z"/>
<path class="fr" d="M85 350L115 465L150 515L175 548L200 555L240 552L265 540L285 530L250 530L200 490L150 435L110 375L85 348z"/>
<path class="fg" d="M285 525L310 522L340 508L365 494L385 497L408 485L440 490L470 487L500 460L550 408L640 407L640 415L590 425L560 440L510 478L470 490L410 498L370 510L340 520L285 530z"/>
<path class="fr" d="M910 402L962 513L1000 540L1030 535L1055 520L1055 515L1020 505L985 480L950 440L910 405z"/>
<path class="bg1" d="M12 406V400M25 406V398M38 406V397M51 406V397M65 406V397M78 406V400M290 406V400M303 406V397M316 406V397M330 406V397M343 406V394M356 406V388M369 406V384M382 406V390M396 406V393M409 406V388M422 406V394M435 406V399M449 406V399M462 406V399M475 406V394M488 406V384M501 406V378M514 406V371M527 406V366M540 406V366M553 406V369M567 406V378M580 406V384M593 406V390M606 406V392M619 406V397M632 406V399M645 406V402M658 406V402M672 406V400M685 406V400M698 406V402M711 406V402M725 406V402M738 406V402M751 406V402M765 406V402M778 406V402M897 406V396M910 406V392"/>
<path class="bg2" d="M94 406V443M106 406V468M120 406V483M133 406V488M146 406V489M160 406V489M173 406V486M186 406V476M199 406V461M212 406V453M226 406V439M238 406V433M250 406V424M265 406V414M792 406V408M805 406V410M818 406V413M831 406V416M845 406V416M858 406V418M871 406V420M923 406V418M936 406V431M950 406V446M964 406V470M977 406V468M990 406V464M1003 406V458M1016 406V444M1029 406V436M1042 406V423M1055 406V413"/>
<path class="bl" d="M3 406H1315"/>
<path class="rl" d="M3 356L40 352L85 348L110 375L150 435L200 490L250 530L285 530L340 520L370 510L410 498L470 490L510 478L560 440L590 425L640 415L700 410L770 406L830 415L870 420L910 405L950 440L985 480L1020 505L1055 515"/>
<path class="ub" d="M3 352L40 346L70 340L85 350L115 465L150 515L175 548L200 555L240 552L265 540L285 525L310 522L340 508L365 494L385 497L408 485L440 490L470 487L500 460L550 408L600 408L640 407L665 415L700 408L770 406L830 420L870 424L910 400L962 513L1000 540L1030 535L1055 520"/>
<path class="bl" d="M3 650H1315M3 812H1315"/>
<path class="fp" d="M3 612L40 605L52 612L70 612L95 720L118 848L145 857L175 862L170 860L145 825L120 740L95 645L70 612L40 612L3 618zM250 835L265 810L290 695L250 835zM330 765L345 750L350 730L310 740zM395 770L412 757L425 770L448 838L465 820L470 795L445 790L420 750L380 730L368 700zM555 620L585 685L595 697L635 697L660 745L690 757L700 757L715 780L750 755L715 775L680 740L650 710L620 695L585 630L555 617zM800 750L815 795L832 800L845 768L835 782L800 750zM860 780L870 780L860 780zM912 692L950 845L965 843L985 828L1000 825L975 810L940 745L915 737z"/>
<path class="fv" d="M175 862L215 835L250 838L210 848zM265 810L290 695L302 695L330 765L310 740L280 800zM350 730L355 708L368 700L380 730zM470 795L510 612L540 607L555 617L530 660L500 740zM715 780L750 742L780 745L800 750L750 755zM845 768L860 780L882 755L912 692L915 737L870 780L835 782zM985 828L1015 802L1030 800L1042 788L1055 788L1055 795L1030 815L1000 825z"/>
<path class="rd" d="M3 618L40 612L70 612L95 645L120 740L145 825L170 860L210 848L250 835L280 800L310 740L345 730L380 730L420 750L445 790L470 795L500 740L530 660L555 617L585 630L620 695L650 710L680 740L715 775L750 755L800 750L835 782L870 780L915 737L940 745L975 810L1000 825L1030 815L1055 795"/>
<path class="k" d="M3 612L40 605L52 612L70 612L95 720L118 848L145 857L175 862L215 835L250 838L265 810L290 695L302 695L330 765L345 750L355 708L368 700L395 770L412 757L425 770L448 838L465 820L510 612L540 607L555 620L585 685L595 697L635 697L660 745L690 757L700 757L715 780L750 742L780 745L815 795L832 800L845 768L860 780L882 755L912 692L950 845L965 843L985 828L1015 802L1030 800L1042 788L1055 788"/>
</g>
<path class="tk" d="M878 538h4M878 556h2M878 575h2M878 593h2M878 607h2M878 618h4M878 635h4M878 655h2M878 680h2M878 695h2M878 717h4M878 736h4M878 754h4M878 765h2M878 783h2M878 800h4M471 813v4M735 813v4"/>
<text x="885" y="543" class="bg">100</text><text x="885" y="583" class="ax">50</text><text x="885" y="623" class="bg">0</text>
<rect x="883.500" y="578.500" width="36" height="14" class="vb"/><text x="885" y="589">43,096</text><path d="M878 585h5" stroke="#111" stroke-width="1.500"/>
<text x="885" y="640" class="ax">5</text><text x="885" y="682" class="ax">-5</text>
<rect x="883.500" y="650.500" width="40" height="14" class="vb"/><text x="885" y="661" style="fill:#e87070">-0,4518</text>
<rect x="883.500" y="678.500" width="40" height="14" class="vb"/><text x="885" y="689" style="fill:#e87070">-7,0854</text>
<rect x="883.500" y="692.500" width="40" height="14" class="vb"/><text x="885" y="703" style="fill:#4a4ae8">-7,5373</text>
<text x="885" y="723" class="bg">100</text><text x="885" y="740" class="ax">80</text><text x="885" y="758" class="ax">60</text><text x="885" y="776" class="ax">40</text><text x="885" y="811" class="bg">0</text>
<rect x="883.500" y="769.500" width="36" height="14" class="vb"/><text x="885" y="780">29,148</text>
<rect x="883.500" y="784.500" width="36" height="14" class="vb"/><text x="885" y="795" style="fill:#e87070">25,544</text>
<text x="471" y="830" class="m b" style="font-size:12.500px">11</text><text x="735" y="830" class="m ax">09:00</text>

<!-- RIGHT CHART PANEL -->
<rect x="940" y="60" width="493" height="774" fill="#eff1f4"/>
<rect x="940" y="60" width="493" height="23" fill="url(#tg)"/>
<path d="M940 83.500h485M940 116.500h475" stroke="#bcc0c4" shape-rendering="crispEdges"/>
<use href="#logo" x="939" y="61"/><use href="#arr" x="962" y="70"/>
<text x="973" y="76" style="font-size:11.500px">DAX</text><use href="#info" x="1000" y="66"/>
<text x="1017" y="76" class="p">10 019,2 (-0,59%)</text><text x="1109" y="76" class="b">09:13:08</text><text x="1156" y="76">Allemagne 30 au comptant (Mini-contr (-)</text>
<use href="#win" x="1393" y="68"/>
<rect x="982.500" y="89.500" width="85" height="21" rx="4" class="sel"/><text x="986" y="104">200 unités</text><rect x="1049" y="95" width="15" height="13" fill="#eef3f7"/><use href="#arr" x="1053" y="98"/>
<rect x="1114.500" y="89.500" width="76" height="21" rx="4" class="sel"/><text x="1171" y="104" class="e">21</text><path d="M1176 97l3-3 3 3zM1176 103l3 3 3-3z" fill="#111"/>
<rect x="1191.500" y="89.500" width="88" height="21" rx="4" class="sel"/><text x="1195" y="104">(x) ticks</text><rect x="1261" y="95" width="15" height="13" fill="#eef3f7"/><use href="#arr" x="1265" y="98"/>
<use href="#ind" x="1327" y="87"/><use href="#ficon" x="1417" y="85"/>
<text x="954" y="132">Portefeuille:</text><text x="1015" y="132" class="b">n/d</text><text x="1044" y="132">Gain latent :</text><text x="1106" y="132">-</text><text x="1122" y="132">Gain Jour :</text><text x="1178" y="132">-</text>
<text x="1195" y="132">Ordres:</text><text x="1237" y="132" class="b">0</text><use href="#xb" x="1244" y="123"/><text x="1263" y="132">/</text><text x="1271" y="132" class="b">0</text><use href="#gear" x="1279" y="121"/>
<text x="1310" y="132">Position :</text><text x="1358" y="132" class="b">0</text><use href="#xb" x="1365" y="123"/><text x="1384" y="132">/</text><text x="1392" y="132" class="b">0</text><use href="#gear" x="1399" y="121"/>
<rect x="942.500" y="139.500" width="437" height="390.500" class="fb"/>
<rect x="942.500" y="533.500" width="437" height="95.500" class="fb"/>
<rect x="942.500" y="632.500" width="437" height="71.500" class="fb"/>
<rect x="942.500" y="707.500" width="437" height="105.500" class="fb"/>
<path d="M943 247.500H1379M943 398.500H1379" stroke="#111" stroke-width="2" stroke-dasharray="5 3"/>
<path d="M943 383.500H1379M943 517.500H1379" stroke="#1a8a1a" stroke-dasharray="4 3"/>
<path d="M943 325.500H1379M943 462.500H1379" stroke="#1414d8" shape-rendering="crispEdges"/>
<g transform="translate(940 300) scale(.33333)">
<path class="w" d="M18 248V262M12 255H24M31 258V318M45 300V330M39 325H51M58 287V332M70 315V350M83 290V342M96 268V305M90 300H102M108 268V300M121 252V318M134 325V392M147 368V392M141 382H153M160 368V395M172 350V430M184 349V430M198 385V420M211 350V395M222 362V428M236 405V428M249 422V442M262 408V460M274 433V475M287 470V518M300 425V473M313 405V447M307 440H319M326 425V455M339 430V446M333 438H345M352 388V440M365 382V440M377 430V458M391 425V460M403 350V432M414 322V368M427 297V352M441 345V407M454 390V414M466 345V405M479 283V350M492 275V335M505 322V370M517 345V372M511 358H523M530 325V368M524 347H536M544 325V365M538 340H550M556 322V368M568 305V345M581 300V342M595 340V352M607 355V385M619 334V380M632 333V400M646 385V467M658 420V480M670 420V430M664 425H676M683 345V422M696 340V362M708 332V358M721 325V345M715 335H727M734 303V345M748 225V300M760 213V260M772 235V265M785 222V255M798 222V260M811 252V285M823 275V305M836 307V337M850 318V350M862 322V335M856 328H868M875 315V358M888 325V350M882 332H894M901 262V330M913 265V300M907 272H919M926 202V262M938 190V238M952 198V242M965 242V282M959 242H971"/>
<path class="g2" d="M52 300h12v28h-12zM77 300h12v40h-12zM102 296h12v4h-12zM154 380h12v10h-12zM166 368h12v17h-12zM192 400h12v14h-12zM205 385h12v7h-12zM281 473h12v12h-12zM294 436h12v34h-12zM320 425h12v30h-12zM346 388h12v52h-12zM385 428h12v9h-12zM397 366h12v64h-12zM408 352h12v14h-12zM421 335h12v15h-12zM460 345h12v60h-12zM473 283h12v66h-12zM550 345h12v5h-12zM562 322h12v18h-12zM613 334h12v46h-12zM652 422h12v56h-12zM677 350h12v70h-12zM690 340h12v22h-12zM702 332h12v26h-12zM728 303h12v35h-12zM742 240h12v58h-12zM766 242h12v20h-12zM779 232h12v18h-12zM844 318h12v15h-12zM895 280h12v48h-12zM920 202h12v60h-12z"/>
<path class="r2" d="M25 258h12v60h-12zM64 315h12v35h-12zM115 298h12v19h-12zM128 325h12v67h-12zM178 351h12v51h-12zM216 389h12v36h-12zM230 405h12v23h-12zM243 422h12v20h-12zM256 435h12v10h-12zM268 433h12v39h-12zM359 395h12v43h-12zM371 435h12v20h-12zM435 345h12v62h-12zM448 403h12v7h-12zM486 283h12v49h-12zM499 332h12v30h-12zM575 316h12v22h-12zM589 340h12v12h-12zM601 355h12v17h-12zM626 333h12v62h-12zM640 400h12v65h-12zM754 226h12v32h-12zM792 240h12v18h-12zM805 252h12v33h-12zM817 275h12v30h-12zM830 307h12v30h-12zM869 322h12v16h-12zM932 207h12v30h-12zM946 232h12v8h-12z"/>
<path fill="#e85c5c" d="M742 128h12v24h8l-14 16-14-16h8z"/>
<path fill="#1ec04a" stroke="#1a8a3a" stroke-width="1" vector-effect="non-scaling-stroke" d="M574 257h12v-18h10l-16-20-16 20h10z"/>
<path stroke="#1414e8" stroke-width="2" vector-effect="non-scaling-stroke" fill="none" d="M632 258L800 275M785 160L915 230"/>
<path fill="#1414e8" d="M822 279L794 288L797 264zM934 240L905 240L918 214z"/>
</g>
<text x="946" y="323" class="ax">10 031,56</text><text x="946" y="460" class="ax">10 000,45</text>
<text x="943" y="528" class="ax">© IT-Finance.com  <tspan style="font-style:italic">Données indicatives</tspan></text>
<text x="1378" y="245" class="e ax">Piv J</text><text x="1378" y="381" class="e" style="fill:#3aa03a">mS1 J</text><text x="1378" y="395" class="e ax">Piv M</text><text x="1378" y="514" class="e" style="fill:#3aa03a">S1 J</text>
<path class="tk" d="M1380 157h4M1380 179h2M1380 201h4M1380 223h2M1380 288h4M1380 310h2M1380 332h4M1380 354h2M1380 420h4M1380 442h2M1380 464h4M1380 486h2"/>
<text x="1386" y="161" class="ax">10 070</text><text x="1386" y="205" class="ax">10 060</text><text x="1386" y="292" class="ax">10 040</text><text x="1386" y="336" class="ax">10 030</text><text x="1386" y="424" class="ax">10 010</text><text x="1386" y="469" class="bg">10 000</text><text x="1386" y="511" class="ax">9 990</text>
<rect x="1385.500" y="241.500" width="44" height="14" class="vb"/><text x="1387" y="252">10 049,1</text><path d="M1380 248h5" stroke="#111"/>
<rect x="1385.500" y="377.500" width="44" height="14" class="vb"/><text x="1387" y="388" style="fill:#3aa03a">10 018,5</text>
<rect x="1385.500" y="397.500" width="44" height="14" class="vb"/><text x="1387" y="408">10 014,9</text>
<rect x="1385" y="367" width="45" height="14" fill="url(#yl)"/><text x="1387" y="377">10 019,2</text>
<rect x="1385" y="389" width="22" height="14" fill="#90e890"/><text x="1387" y="401">10T</text>
<rect x="1385.500" y="510.500" width="38" height="15" class="vb"/><text x="1386" y="522" style="fill:#3aa03a">9 987,8</text><path d="M1380 517h5" stroke="#3aa03a"/>
<g transform="translate(940 520) scale(.33333)">
<path class="bl" d="M8 133H1318M8 238H1318"/>
<path class="k" d="M8 216L20 218L35 230L50 230L60 224L70 230L80 214L95 217L110 211L122 217L135 232L170 225L185 230L200 230L212 224L235 232L262 235L275 241L288 240L302 224L318 222L328 215L340 215L352 193L365 210L378 217L390 207L404 180L428 170L445 196L455 196L478 157L505 184L520 184L530 178L555 179L568 173L605 188L618 180L648 216L660 202L670 202L682 180L695 182L710 176L722 178L748 151L762 156L785 151L800 158L835 190L850 184L885 190L903 170L915 168L925 149L940 160L965 163"/>
<path class="fg" d="M8 548L30 535L50 530L68 528L110 503L125 505L180 498L215 494L250 491L300 490L340 472L360 458L385 455L400 445L425 420L450 418L490 392L530 385L590 383L625 386L570 392L530 400L480 420L430 445L400 462L350 480L300 493L250 496L200 505L150 512L110 525L60 538L8 545zM730 388L755 365L790 349L810 352L845 364L810 362L775 372L730 390zM910 376L930 363L965 358L965 366L910 373z"/>
<path class="fr" d="M625 388L668 408L700 400L660 400L625 390zM845 365L885 380L910 376L880 375z"/>
<path class="bg1" d="M18 394V391M31 394V389M44 394V386M57 394V385M70 394V384M83 394V382M96 394V377M108 394V375M121 394V372M134 394V377M147 394V380M160 394V382M172 394V381M185 394V384M198 394V381M211 394V383M223 394V384M236 394V384M249 394V387M262 394V388M275 394V390M288 394V389M300 394V386M313 394V383M326 394V381M339 394V377M352 394V375M365 394V376M377 394V378M390 394V376M403 394V372M416 394V365M429 394V363M441 394V370M454 394V372M467 394V370M479 394V363M492 394V365M505 394V372M518 394V374M531 394V377M544 394V379M556 394V381M569 394V382M582 394V382M595 394V384M608 394V386M620 394V386M708 394V390M721 394V388M734 394V384M747 394V376M760 394V372M773 394V372M785 394V368M798 394V372M811 394V376M824 394V384M924 394V387M938 394V384M951 394V384M965 394V384"/>
<path class="bg2" d="M645 394V403M657 394V406M669 394V407M681 394V405M850 394V397M862 394V400M875 394V404M887 394V404M900 394V401M913 394V398"/>
<path class="bl" d="M8 394H1318"/>
<path class="rl" d="M8 545L60 538L110 525L150 512L200 505L250 496L300 493L350 480L400 462L430 445L480 420L530 400L570 392L625 390L660 400L700 398L730 390L775 372L810 362L845 364L880 375L910 373L965 366"/>
<path class="ub" d="M8 548L30 535L50 530L68 528L110 503L125 505L180 498L215 494L250 491L300 490L340 472L360 458L385 455L400 445L425 420L450 418L490 392L530 385L590 383L625 386L668 408L700 400L730 388L755 365L790 349L810 352L845 365L885 380L910 376L930 363L965 358"/>
<path class="bl" d="M8 637H1318M8 808H1318"/>
<path class="fp" d="M130 745L160 852L175 818L200 802L180 815L150 770zM200 802L220 812L252 847L280 847L280 842L250 835L215 820zM445 680L465 700L480 650L455 655L430 665zM493 635L510 665L525 708L570 683L595 700L605 748L618 748L660 828L680 790L660 785L630 730L600 695L565 692L525 675L480 665zM800 610L835 685L850 715L885 805L910 775L885 765L860 710L830 640L800 605z"/>
<path class="fv" d="M8 800L20 775L35 772L70 792L35 795L8 822zM85 770L98 755L110 712L122 715L130 745L100 775zM280 847L300 810L325 735L335 730L352 693L378 712L360 725L335 780L305 835zM395 705L405 680L428 610L445 680L430 665zM660 828L680 750L710 652L720 650L735 620L758 598L780 612L800 605L760 620L730 670L700 770L680 790zM885 805L905 780L925 660L952 633L965 665L965 675L940 730L910 775z"/>
<path class="rd" d="M8 822L35 795L70 783L100 775L130 745L150 770L180 815L215 820L250 835L280 842L305 835L335 780L360 725L395 705L430 665L455 655L480 665L525 675L565 692L600 695L630 730L660 785L680 790L700 770L730 670L760 620L800 605L830 640L860 710L885 765L910 775L940 730L965 675"/>
<path class="k" d="M8 800L20 775L35 772L70 792L85 770L98 755L110 712L122 715L135 745L160 852L175 818L200 802L220 812L252 847L270 845L280 847L300 810L325 735L335 730L352 693L378 712L390 730L405 680L428 610L445 680L465 700L480 650L493 635L510 665L525 708L570 683L595 700L605 748L618 748L660 828L680 750L710 652L720 650L735 620L758 598L780 612L800 610L835 685L850 715L885 805L905 780L925 660L952 633L965 665"/>
</g>
<path class="tk" d="M1380 539h4M1380 556h4M1380 573h2M1380 590h4M1380 607h4M1380 624h4M1380 681h4M1380 713h4M1380 731h2M1380 751h2M1380 770h4M1380 790h4M1380 806h4M989 813v4M1087 813v4M1155 813v4M1231 813v4M1274 813v4M1325 813v4"/>
<text x="1386" y="544" class="bg">100</text><text x="1386" y="560" class="ax">80</text><text x="1386" y="594" class="ax">40</text><text x="1386" y="611" class="ax">20</text><text x="1386" y="628" class="bg">0</text>
<rect x="1385.500" y="566.500" width="35" height="14" class="vb"/><text x="1387" y="578">58,638</text><path d="M1380 574h5" stroke="#111" stroke-width="1.500"/>
<rect x="1385.500" y="634.500" width="39" height="12.500" class="vb"/><text x="1387" y="645" style="fill:#e87070">1,5122</text>
<rect x="1385.500" y="645.500" width="39" height="14" class="vb"/><text x="1387" y="656" style="fill:#88dd44">0,4009</text><path d="M1380 640h5" stroke="#3333cc"/><path d="M1380 648h5" stroke="#44cc44"/>
<text x="1386" y="685" class="ax">-5</text>
<text x="1386" y="718" class="bg">100</text><text x="1386" y="774" class="ax">40</text><text x="1386" y="793" class="ax">20</text><text x="1386" y="811" class="bg">0</text>
<rect x="1385.500" y="728.500" width="35" height="14" class="vb"/><text x="1387" y="739">70,573</text>
<rect x="1385.500" y="742.500" width="35" height="14" class="vb"/><text x="1387" y="753" style="fill:#e87070">68,325</text>
<text x="989.500" y="830" class="m ax">09:06</text><text x="1087" y="830" class="m ax">09:08</text><text x="1155" y="830" class="m ax">09:10</text><text x="1231" y="830" class="m ax">09:12</text><text x="1274" y="830" class="m ax">09:14</text><text x="1325" y="830" class="m ax">09:18</text>
</svg>
</body></html>
